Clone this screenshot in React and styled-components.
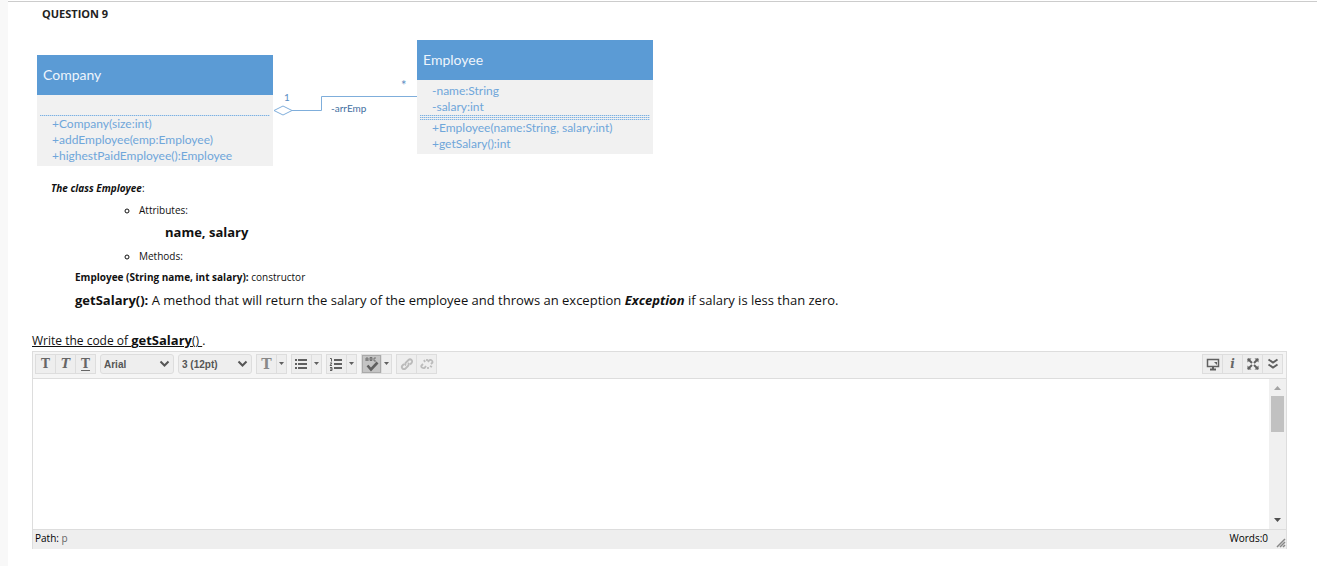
import React from "react";
import styled, { createGlobalStyle } from "styled-components";

const GlobalStyle = createGlobalStyle`
  * {
    box-sizing: border-box;
  }

  body {
    margin: 0;
    background-color: #f8f8f8;
    font-family: "Open Sans", "Noto Sans", sans-serif;
    color: #111;
  }
`;

const Page = styled.main`
  min-height: 100vh;
  margin-left: 8px;
  padding: 1px 30px 16px 24px;
  background: linear-gradient(#ccc, #ccc) 0 1px / 100% 1px no-repeat #fff;
`;

const Title = styled.h3`
  margin: 0;
  padding: 4px 0 0 10px;
  font-size: 11px;
  line-height: 18px;
  font-weight: 700;
  color: #222;
`;

const Diagram = styled.div`
  display: flex;
  align-items: flex-start;
  margin-top: 17px;
  padding-left: 5px;
  height: 138px;
  font-family: Lato, "Open Sans", sans-serif;
  color: #6fa6da;
`;

const ClassBox = styled.section`
  width: 236px;
  margin-top: ${props => (props.lower ? "15px" : "0")};
  padding-bottom: 2px;
  background-color: #f1f1f1;
  font-size: 12px;
  line-height: 16px;
`;

const ClassName = styled.h4`
  margin: 0;
  padding-left: 6px;
  background-color: #5b9bd5;
  color: #eef5fc;
  font-size: 14px;
  line-height: 40px;
  font-weight: 400;
`;

const Members = styled.div`
  min-height: 20px;
  padding: ${props => (props.attributes ? "3px 15px 0" : "0 15px")};
`;

const Divider = styled.hr`
  height: ${props => (props.double ? "5px" : "1px")};
  margin: 0 3px;
  border: 0;
  background:
    repeating-linear-gradient(transparent 0 1px, #f1f1f1 1px 2px),
    repeating-linear-gradient(90deg, #7fb1e0 0 1px, #c6dcf0 1px 2px);
`;

const Connector = styled.svg`
  flex: none;
  width: 144px;
  height: 128px;
`;

const Line = styled.p`
  margin: ${props => props.top || 0}px 0 0;
  padding-left: ${props => props.indent || 0}px;
  font-size: ${props => (props.large ? 13 : 10)}px;
  line-height: 20px;
`;

const Circle = styled.ul`
  margin: ${props => props.top}px 0 0;
  padding-left: 107px;
  list-style: circle;
  font-size: 10px;
  line-height: 20px;
`;

const Prompt = styled.p`
  margin: 20px 0 0;
  font-size: 12px;
  line-height: 20px;

  b {
    font-size: 13px;
  }
`;

const Editor = styled.div`
  border: 1px solid #ddd;
  border-bottom: 0;
  background-color: #fff;
`;

const Toolbar = styled.div`
  display: flex;
  align-items: flex-start;
  gap: 4px;
  height: 27px;
  padding: 2px 3px 0 2px;
  border-bottom: 1px solid #ddd;
  background-color: #f5f5f5;
`;

const Spacer = styled.div`
  flex: 1;
`;

const Group = styled.div`
  display: flex;
  height: 20px;
  border: 1px solid #ddd;
`;

const ToolButton = styled.button`
  box-sizing: content-box;
  display: flex;
  align-items: center;
  justify-content: center;
  width: ${props => (props.narrow ? 9 : 19)}px;
  padding: 0;
  border: 0;
  background-color: ${props => (props.pressed ? "#c4c4c4" : "#eee")};
  box-shadow: ${props => (props.pressed ? "inset 0 0 0 1px #aaa" : "none")};
  color: ${props => (props.light ? "#bbb" : "#606060")};

  & + & {
    border-left: 1px solid #ddd;
  }
`;

const Letter = styled.span`
  font-family: "DejaVu Serif", serif;
  font-size: ${props => (props.large ? 14 : 12)}px;
  line-height: 16px;
  font-weight: 700;
  font-style: ${props => (props.italic ? "italic" : "normal")};
  text-decoration: ${props => (props.underline ? "underline" : "none")};
  text-underline-offset: 2px;
  color: ${props => (props.large ? "#888" : "#666")};
`;

const SelectWrap = styled.label`
  display: grid;
  align-items: center;
  width: 74px;
  height: 20px;

  select,
  svg {
    grid-area: 1 / 1;
  }

  svg {
    justify-self: end;
    margin-right: 4px;
    color: #555;
    pointer-events: none;
  }
`;

const Select = styled.select`
  appearance: none;
  width: 100%;
  height: 20px;
  padding: 0 3px;
  border: 1px solid #ddd;
  border-radius: 3px;
  background-color: #eee;
  font: bold 10px "Liberation Sans", sans-serif;
  color: #555;
`;

const Body = styled.div`
  display: flex;
  height: 150px;
`;

const TextArea = styled.textarea`
  flex: 1;
  border: 0;
  padding: 8px;
  resize: none;
  outline: none;
  font: 16px "Liberation Sans", sans-serif;
`;

const ScrollBar = styled.div`
  display: flex;
  flex-direction: column;
  align-items: center;
  width: 17px;
  background-color: #f0f0f0;
`;

const Thumb = styled.div`
  width: 13px;
  height: 36px;
  margin-bottom: auto;
  background-color: #c1c1c1;
`;

const StatusBar = styled.div`
  display: flex;
  justify-content: space-between;
  height: 20px;
  padding: 0 0 0 2px;
  border-top: 1px solid #ddd;
  background-color: #eee;
  font-size: 10px;
  line-height: 16px;
  color: #000;

  span {
    color: #666;
  }
`;

const Counter = styled.div`
  display: flex;
  gap: 8px;

  svg {
    align-self: flex-end;
  }
`;

const Icon = ({ children, width = 16, height = 16 }) => (
  <svg
    width={width}
    height={height}
    viewBox={`0 0 ${width} ${height}`}
    fill="none"
    stroke="currentColor"
    strokeWidth="2"
    aria-hidden="true"
  >
    {children}
  </svg>
);

const More = ({ label }) => (
  <ToolButton narrow aria-label={label}>
    <Icon width={5} height={4}>
      <path d="M0 0h5L2.500 3z" fill="currentColor" stroke="none" />
    </Icon>
  </ToolButton>
);

const Dropdown = ({ label, options }) => (
  <SelectWrap>
    <Select aria-label={label}>
      {options.map(option => (
        <option key={option}>{option}</option>
      ))}
    </Select>
    <Icon width={11} height={8}>
      <path d="M1.500 1.500l4 4 4-4" />
    </Icon>
  </SelectWrap>
);

const ClassDiagram = () => (
  <Diagram>
    <ClassBox lower>
      <ClassName>Company</ClassName>
      <Members attributes />
      <Divider />
      <Members>
        <div>+Company(size:int)</div>
        <div>+addEmployee(emp:Employee)</div>
        <div>+highestPaidEmployee():Employee</div>
      </Members>
    </ClassBox>
    <Connector viewBox="0 0 144 128" fill="none" stroke="#7faedb">
      <path d="M1 70.500l9-4.500 9 4.500-9 4.500zM19 70.500h29.500v-14H144" />
      <g fill="#5b8fc4" stroke="none" fontSize="10">
        <text x="11" y="61">1</text>
        <text x="58" y="72" fill="#3f6f9f">-arrEmp</text>
        <text x="128" y="50" fontSize="13">*</text>
      </g>
    </Connector>
    <ClassBox>
      <ClassName>Employee</ClassName>
      <Members attributes>
        <div>-name:String</div>
        <div>-salary:int</div>
      </Members>
      <Divider double />
      <Members>
        <div>+Employee(name:String, salary:int)</div>
        <div>+getSalary():int</div>
      </Members>
    </ClassBox>
  </Diagram>
);

const EditorToolbar = () => (
  <Toolbar>
    <Group>
      <ToolButton aria-label="Bold"><Letter>T</Letter></ToolButton>
      <ToolButton aria-label="Italic"><Letter italic>T</Letter></ToolButton>
      <ToolButton aria-label="Underline"><Letter underline>T</Letter></ToolButton>
    </Group>
    <Dropdown label="Font family" options={["Arial", "Courier New", "Verdana"]} />
    <Dropdown label="Font size" options={["3 (12pt)", "4 (14pt)", "5 (18pt)"]} />
    <Group>
      <ToolButton aria-label="Text color"><Letter large>T</Letter></ToolButton>
      <More label="More text colors" />
    </Group>
    <Group>
      <ToolButton aria-label="Bullet list">
        <Icon>
          <path d="M1 4h2M1 8h2M1 12h2" />
          <path d="M4 4h9M4 8h9M4 12h9" />
        </Icon>
      </ToolButton>
      <More label="Bullet styles" />
    </Group>
    <Group>
      <ToolButton aria-label="Numbered list">
        <Icon>
          <path d="M1 2.500h1.500v3M1 7h2l-2 2.500h2M1 11.500h2v3H1M1 13h2" strokeWidth="1" />
          <path d="M5 4h8M5 8h8M5 12h8" />
        </Icon>
      </ToolButton>
      <More label="Number styles" />
    </Group>
    <Group>
      <ToolButton pressed aria-label="Spell check">
        <Icon>
          <path d="M2 5V2h2v3M2 4h2M6 1.500h2v3H6zM6 3h2M12 2h-2v3h2" strokeWidth=".8" />
          <path d="M3.500 9.500l3.500 4 6.500-7" strokeWidth="2.600" />
        </Icon>
      </ToolButton>
      <More label="Spell check options" />
    </Group>
    <Group>
      <ToolButton light aria-label="Insert link">
        <Icon>
          <path
            d="M7 9.500c-1-1-1-2 0-3l2.500-2.500c2-2 5 1 3 3L11 8.500M9 7c1 1 1 2 0 3l-2.500 2.500c-2 2-5-1-3-3L5 8"
            strokeWidth="1.800"
          />
        </Icon>
      </ToolButton>
      <ToolButton light aria-label="Remove link">
        <Icon>
          <path
            d="M9 6l1-1.500c1.500-1.500 4 0 3.500 2L12 8M7 10l-1 1.500c-1.500 1.500-4.500 0-3.500-2L4 8M5 4l1 2M8 3v2M11 10l2 1M9 11v2"
            strokeWidth="1.800"
          />
        </Icon>
      </ToolButton>
    </Group>
    <Spacer />
    <Group>
      <ToolButton aria-label="Preview">
        <Icon>
          <path d="M2.500 3.500h11v7h-11z" strokeWidth="1.500" />
          <path d="M8 11v2M5 13.500h6" />
          <path d="M9 6h3v3z" fill="currentColor" stroke="none" />
        </Icon>
      </ToolButton>
      <ToolButton aria-label="Help"><Letter italic>i</Letter></ToolButton>
      <ToolButton aria-label="Full screen">
        <Icon>
          <path d="M3 3l4 4M13 3L9 7M3 13l4-4M13 13L9 9" />
          <path
            d="M2.500 2.500h4l-4 4zM13.500 2.500h-4l4 4zM2.500 13.500h4l-4-4zM13.500 13.500h-4l4-4z"
            fill="currentColor"
            stroke="none"
          />
        </Icon>
      </ToolButton>
      <ToolButton aria-label="Show more">
        <Icon>
          <path d="M3.500 3.500l4.500 3 4.500-3M3.500 8.500l4.500 3 4.500-3" />
        </Icon>
      </ToolButton>
    </Group>
  </Toolbar>
);

const App = () => (
  <>
    <GlobalStyle />
    <Page>
      <Title>QUESTION 9</Title>
      <ClassDiagram />
      <Line indent={19}>
        <b><i>The class Employee</i></b>:
      </Line>
      <Circle top={2}>
        <li>Attributes:</li>
      </Circle>
      <Line top={2} indent={133} large>
        <b>name, salary</b>
      </Line>
      <Circle top={4}>
        <li>Methods:</li>
      </Circle>
      <Line top={1} indent={43}>
        <b>Employee (String name, int salary):</b> constructor
      </Line>
      <Line top={3} indent={43} large>
        <b>getSalary():</b> A method that will return the salary of the employee
        and throws an exception <b><i>Exception</i></b> if salary is less than
        zero.
      </Line>
      <Prompt>
        <u>Write the code of <b>getSalary</b>()&nbsp;</u>.
      </Prompt>
      <Editor>
        <EditorToolbar />
        <Body>
          <TextArea aria-label="Answer" />
          <ScrollBar>
            <Icon width={17} height={17}>
              <path d="M5 11h7L8.500 7z" fill="#a3a3a3" stroke="none" />
            </Icon>
            <Thumb />
            <Icon width={17} height={17}>
              <path d="M5 6h7l-3.500 4z" fill="#505050" stroke="none" />
            </Icon>
          </ScrollBar>
        </Body>
        <StatusBar>
          <div>Path: <span>p</span></div>
          <Counter>
            Words:0
            <Icon width={10} height={11}>
              <path d="M1 9l8-8M4 9l5-5M7 9l2-2" stroke="#888" strokeWidth="1.500" />
            </Icon>
          </Counter>
        </StatusBar>
      </Editor>
    </Page>
  </>
);

export default App;
